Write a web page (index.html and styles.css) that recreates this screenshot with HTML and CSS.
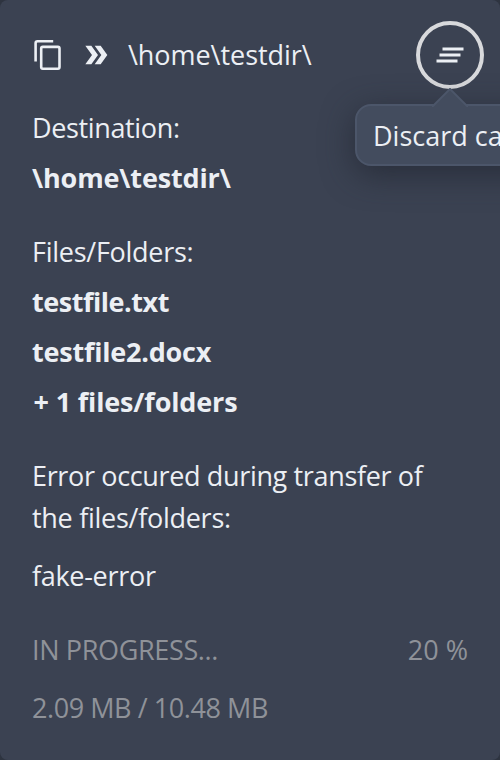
FILE: index.html
```
<!DOCTYPE html>
<html lang="en">
<head>
<meta charset="utf-8">
<title>File transfer</title>
<link rel="stylesheet" href="styles.css">
</head>
<body>
<main class="card">
  <header class="header">
    <svg class="icon-copy" viewBox="0 0 32 32" fill="none" stroke="currentColor" stroke-width="2.6"><path d="M3.6 22.5V4.3Q3.6 2.3 5.6 2.3H21.2"/><rect x="9.2" y="7.9" width="18.3" height="21.8" rx="1.6"/></svg>
    <svg class="icon-arrow" viewBox="0 0 24 24" fill="currentColor"><path d="M15.5 5H11l5 7-5 7h4.5l5-7z"/><path d="M8.5 5H4l5 7-5 7h4.5l5-7z"/></svg>
    <span class="path">\home\testdir\</span>
    <div class="action">
      <button class="discard" aria-label="Discard card"><svg viewBox="0 0 24 24" fill="currentColor"><path d="M5 13h14v-2H5v2zm-2 4h14v-2H3v2zM7 7v2h14V7H7z"/></svg></button>
      <div class="tooltip"><svg class="pointer" viewBox="0 0 36 19"><path class="pointer-fill" d="M0 19L18 1l18 18z"/><path class="pointer-edge" d="M0 18H1L18 1l17 17h1"/></svg><span class="tip-text">Discard card</span></div>
    </div>
  </header>
  <section class="group tight">
    <p><span class="destination">Destination:</span></p>
    <p class="bold"><span class="target">\home\testdir\</span></p>
  </section>
  <section class="group tight">
    <p><span class="files">Files/Folders:</span></p>
    <p class="bold"><span class="file-one">testfile.txt</span></p>
    <p class="bold"><span class="file-two">testfile2.docx</span></p>
    <p class="bold"><span class="more">+ 1 files/folders</span></p>
  </section>
  <section class="group">
    <p><span class="error-first">Error occured during transfer of</span><br><span class="error-second">the files/folders:</span></p>
    <p><span class="error-name">fake-error</span></p>
  </section>
  <section class="group muted">
    <p class="progress"><span class="status">IN PROGRESS...</span><span class="percent">20 %</span></p>
    <p><span class="size">2.09 MB / 10.48 MB</span></p>
  </section>
</main>
</body>
</html>
```
FILE: styles.css
```
* { box-sizing: border-box; }
body { margin: 0; width: 500px; height: 760px; overflow: hidden; background: #2e3440; }
.card {
  height: 760px; padding: 21px 32px 0; border-radius: 8px;
  background: #3b4252; color: #eceff4;
  font: 27px/42px "Open Sans", "Noto Sans", sans-serif;
  white-space: nowrap; overflow: hidden;
}
p { margin: 0; }
.header { display: flex; align-items: center; height: 68px; margin: 0 -16px 18px 0; }
.icon-copy { width: 32px; height: 32px; margin-right: 16px; }
.icon-arrow { width: 32px; height: 32px; margin-right: 16px; }
.action { position: relative; margin-left: auto; }
.discard {
  display: flex; align-items: center; justify-content: center;
  width: 68px; height: 68px; padding: 0; border: 4px solid #d8d9dc;
  border-radius: 50%; background: transparent; color: #eceff4;
}
.discard svg { width: 36px; height: 36px; }
.tooltip {
  position: absolute; left: -61px; top: 83px; width: 190px; height: 62px;
  padding: 9px 16px; border: 2px solid #4c566a; border-radius: 16px;
  background: #434c5e; box-shadow: 0 8px 32px rgba(35, 40, 51, .8);
}
.pointer { position: absolute; left: 75px; top: -18px; width: 36px; height: 19px; }
.pointer-fill { fill: #434c5e; }
.pointer-edge { fill: none; stroke: #4c566a; stroke-width: 2; }
.group { display: flex; flex-direction: column; gap: 16px; margin-bottom: 32px; }
.tight { gap: 8px; }
.bold { font-weight: 700; }
.muted { color: #8f9299; }
.progress { display: flex; justify-content: space-between; }
.path { letter-spacing: -.05px; }
.destination { letter-spacing: -.36px; }
.target { letter-spacing: -.15px; }
.files { letter-spacing: -.27px; }
.file-one { letter-spacing: -.45px; }
.file-two { letter-spacing: -.22px; }
.more { padding-left: 1.5px; letter-spacing: -.15px; }
.error-first { letter-spacing: -.35px; }
.error-second { letter-spacing: -.28px; }
.error-name { letter-spacing: -.3px; }
.status { letter-spacing: -.35px; }
.size { letter-spacing: -.43px; }
```
